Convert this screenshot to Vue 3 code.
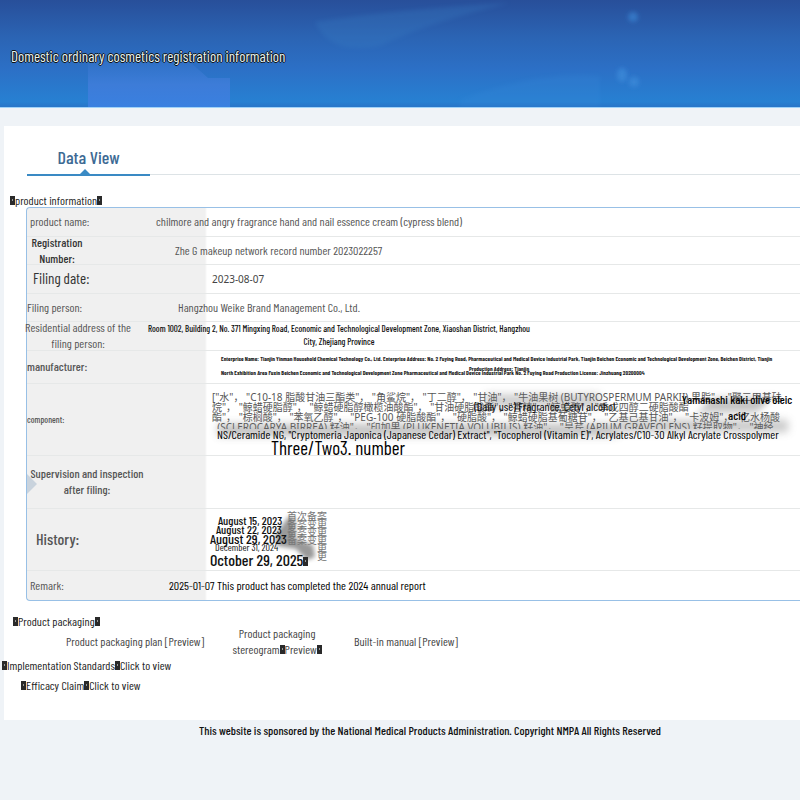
<script setup>
const ingredients = [
  '["水"， "C10-18 脂酸甘油三酯类"， "角鲨烷"， "丁二醇"， "甘油"， "牛油果树 (BUTYROSPERMUM PARKII) 果脂"， "聚二甲基硅',
  '烷"， "鲸蜡硬脂醇"， "鲸蜡硬脂醇橄榄油酸酯"， "甘油硬脂酸酯"，"香精"，"鲸蜡醇"，"季戊四醇二硬脂酸酯',
  '酯"， "棕榈酸"， "苯氧乙醇"， "PEG-100 硬脂酸酯"， "硬脂酸"， "鲸蜡硬脂基葡糖苷"， "乙基己基甘油"， "卡波姆"， "亿水杨酸',
  '  (SCLEROCARYA BIRREA) 籽油"， "印加果 (PLUKENETIA VOLUBILIS) 籽油"， "旱芹 (APIUM GRAVEOLENS) 籽提取物"， "神经'
]
</script>

<template>
  <div class="page">
    <header class="banner">
      <svg class="banner-art" viewBox="0 0 800 107" preserveAspectRatio="none" aria-hidden="true">
        <defs>
          <linearGradient id="patch" x1="0" y1="0" x2="0" y2="1">
            <stop offset="0" stop-color="#3b78d0" stop-opacity="0.3" />
            <stop offset="0.5" stop-color="#3d7cd8" />
            <stop offset="1" stop-color="#3a80e0" />
          </linearGradient>
          <filter id="soft"><feGaussianBlur stdDeviation="2" /></filter>
        </defs>
        <path d="M88 62H190L208 78H230V107H88Z" fill="url(#patch)" />
        <path d="M315 22Q390 10 510 3Q430 22 380 46Q330 56 315 22Z" fill="#3b80c4" opacity="0.25" filter="url(#soft)" />
        <path d="M460 100Q540 70 600 76V107H460Z" fill="#3b8ada" opacity="0.2" filter="url(#soft)" />
        <g fill="#3c8ad8" filter="url(#soft)">
          <circle cx="633" cy="17" r="5" opacity="0.6" />
          <ellipse cx="622" cy="75" rx="5" ry="7" opacity="0.8" />
          <circle cx="634" cy="82" r="5" opacity="0.8" />
        </g>
      </svg>
      <h1>Domestic ordinary cosmetics registration information</h1>
    </header>

    <main class="panel">
      <nav class="tabs"><a class="tab" href="#data">Data View</a></nav>

      <h2 class="product-heading"><i class="box"></i>product information<i class="box"></i></h2>

      <table id="data">
        <tbody>
          <tr class="h29">
            <th scope="row" class="s12 in3">product name:</th>
            <td class="s12 grey in16">chilmore and angry fragrance hand and nail essence cream (cypress blend)</td>
          </tr>
          <tr class="h28">
            <th scope="row" class="s12 medium dark in3"><span class="duo w52">Registration Number:</span></th>
            <td class="s12 grey in35">Zhe G makeup network record number 2023022257</td>
          </tr>
          <tr class="h29">
            <th scope="row" class="s15 dark in6">Filing date:</th>
            <td class="date">2023-08-07</td>
          </tr>
          <tr class="h28">
            <th scope="row" class="s12">Filing person:</th>
            <td class="s12 grey in38">Hangzhou Weike Brand Management Co., Ltd.</td>
          </tr>
          <tr class="h29">
            <th scope="row" class="s12"><span class="duo address-label">Residential address of the filing person:</span></th>
            <td class="s9 medium"><span class="address">Room 1002, Building 2, No. 371 Mingxing Road, Economic and Technological Development Zone, Xiaoshan District, Hangzhou City, Zhejiang Province</span></td>
          </tr>
          <tr class="h33">
            <th scope="row" class="s12 medium">manufacturer:</th>
            <td>
              <div class="maker">
                <p>Enterprise Name: Tianjin Yinman Household Chemical Technology Co., Ltd. Enterprise Address: No. 2 Fuying Road, Pharmaceutical and Medical Device Industrial Park, Tianjin Beichen Economic and Technological Development Zone, Beichen District, Tianjin</p>
                <p>North Exhibition Area Fuxin Beichen Economic and Technological Development Zone Pharmaceutical and Medical Device Industrial Park No. 2 Fuying Road Production License: Jinzhuang 20200004</p>
                <p class="maker-over">Production Address: Tianjin</p>
              </div>
            </td>
          </tr>
          <tr class="h72">
            <th scope="row" class="s9 medium">component:</th>
            <td>
              <div class="component">
                <div class="cn" lang="zh"><p v-for="line in ingredients" :key="line">{{ line }}</p></div>
                <i class="smudge sm-a"></i><i class="smudge sm-b"></i><i class="smudge sm-c"></i><i class="smudge sm-d"></i>
                <p class="over fragrance">(Daily use) Fragrance, Cetyl alcohol</p>
                <p class="over oleic">Yamanashi kaki olive oleic acid</p>
                <p class="over ceramide">NS/Ceramide NG, "Cryptomeria Japonica (Japanese Cedar) Extract", "Tocopherol (Vitamin E)", Acrylates/C10-30 Alkyl Acrylate Crosspolymer</p>
                <p class="over number">Three/Two3. number</p>
              </div>
            </td>
          </tr>
          <tr class="h53">
            <th scope="row" class="s12 medium in3"><i class="notch"></i><span class="duo w113">Supervision and inspection after filing:</span></th>
            <td></td>
          </tr>
          <tr class="h62">
            <th scope="row" class="s16 medium in9">History:</th>
            <td>
              <div class="history">
                <svg class="blot" viewBox="0 0 60 52" aria-hidden="true">
                  <defs><filter id="blur2"><feGaussianBlur stdDeviation="2" /></filter></defs>
                  <path d="M4 24L18 5L24 7L25 28L42 34L44 46L36 49L25 38L6 35Z" fill="#9a9a9a" filter="url(#blur2)" />
                </svg>
                <div class="stamps" lang="zh"><p>首次备案</p><p>备案变更</p><p>备案变更</p><p>备案变更</p><p>更</p><p>更</p></div>
                <ol>
                  <li class="s12 in8">August 15, 2023</li>
                  <li class="s12 in6">August 22, 2023</li>
                  <li class="s14">August 29, 2023</li>
                  <li class="s10 in5 regular">December 31, 2024</li>
                  <li class="s16 last">October 29, 2025<i class="box"></i></li>
                </ol>
              </div>
            </td>
          </tr>
          <tr class="h30">
            <th scope="row" class="s12 in3">Remark:</th>
            <td class="s12 black in29">2025-01-07 This product has completed the 2024 annual report</td>
          </tr>
        </tbody>
      </table>

      <section class="packaging">
        <h2><i class="box"></i>Product packaging<i class="box"></i></h2>
        <div class="links">
          <a href="#plan">Product packaging plan [Preview]</a>
          <a href="#stereogram" class="stereo">Product packaging<br />stereogram<i class="box"></i>Preview<i class="box"></i></a>
          <a href="#manual">Built-in manual [Preview]</a>
        </div>
        <p class="standards"><i class="box"></i>Implementation Standards<i class="box"></i><a href="#standards">Click to view</a></p>
        <p class="claim"><i class="box"></i>Efficacy Claim<i class="box"></i><a href="#claim">Click to view</a></p>
      </section>
    </main>

    <footer>This website is sponsored by the National Medical Products Administration. Copyright NMPA All Rights Reserved</footer>
  </div>
</template>

<style>
body { margin: 0; background: #eff3f7; }
</style>

<style scoped>
.page {
  min-height: 100vh;
  overflow: hidden;
  background: #eff3f7;
  color: #444;
  font-family: "Barlow Condensed", "Liberation Sans Narrow", "Roboto Condensed", Roboto, sans-serif;
}
h1, h2, p, ol { margin: 0; padding: 0; font-weight: 400; }
ol { list-style: none; font-weight: 500; }
a { color: inherit; text-decoration: none; }

.banner {
  position: relative;
  display: flex;
  align-items: center;
  height: 107px;
  padding: 0 11px;
  background: linear-gradient(180deg, #284f9a 0, #2b64b4 35%, #2c70c6 65%, #2780d2 95%, #2875c8 100%);
  border-bottom: 1px solid #9fd2f8;
}
.banner-art { position: absolute; inset: 0; width: 100%; height: 100%; }
h1 {
  position: relative;
  padding-top: 5px;
  font-size: 15px;
  color: #e6f4f4;
  text-shadow: 1px 0 #111, -1px 0 #111, 0 1px #111, 0 -1px #111;
}

.panel { margin: 18px 0 0 4px; padding: 20px 0 27px; background: #fff; }
.tabs { display: flex; margin-left: 23px; height: 28px; border-bottom: 1px solid #dde3e6; }
.tab {
  position: relative;
  box-sizing: border-box;
  width: 123px;
  height: 30px;
  font-size: 18px;
  font-weight: 500;
  line-height: 22px;
  text-align: center;
  color: #3d6a94;
  border-bottom: 2px solid #3a8ac4;
}
.tab::after {
  content: "";
  position: absolute;
  left: 53px;
  bottom: 0;
  border: 5px solid transparent;
  border-top: 0;
  border-bottom-color: #3a8ac4;
}
h2 { font-size: 12px; line-height: 16px; color: #222; white-space: nowrap; }
.product-heading { padding: 17px 0 0 6px; height: 15px; }

.box {
  display: inline-block;
  width: 5px;
  height: 9px;
  background: radial-gradient(circle at 50% 40%, #999 1px, transparent 1px), #2a2a2a;
}

table {
  width: calc(100% - 22px);
  margin-left: 22px;
  table-layout: fixed;
  border-collapse: separate;
  border-spacing: 0;
  border: 1px solid #98c0e6;
  border-right: 0;
  border-radius: 4px 0 0 4px;
  background: linear-gradient(90deg, #f0f0f0 178px, #fff 180px);
}
th, td { box-sizing: border-box; padding: 0 0 2px; border-bottom: 1px solid #e6e8e8; text-align: left; font-weight: 400; white-space: nowrap; vertical-align: middle; }
tr:last-child > * { border-bottom: 0; }
th { position: relative; width: 113px; color: #555; }
td { color: #111; }
.h28 > * { height: 28px; }
.h29 > * { height: 29px; }
.h30 > * { height: 29px; }
.h33 > * { height: 33px; }
.h53 > * { height: 53px; }
.h62 > * { height: 62px; }
.h72 > * { height: 72px; padding-bottom: 0; }
.s9 { font-size: 9px; }
.s10 { font-size: 10px; }
.s12 { font-size: 12px; }
.s14 { font-size: 14px; }
.s15 { font-size: 15px; }
.s16 { font-size: 16px; }
.medium { font-weight: 500; }
.regular { font-weight: 400; }
.grey { color: #555; }
.dark { color: #333; }
.black { color: #000; }
.in3 { padding-left: 3px; }
.in5 { padding-left: 5px; }
.in6 { padding-left: 6px; }
.in8 { padding-left: 8px; }
.in9 { padding-left: 9px; }
.in16 { padding-left: 16px; }
.in29 { padding-left: 29px; }
.in35 { padding-left: 35px; }
.in38 { padding-left: 38px; }
.duo { display: block; margin: -4px 0; line-height: 16px; text-align: center; white-space: normal; }
.w52 { width: 54px; }
.w113 { width: 114px; margin-right: -8px; }
.address-label { width: 106px; margin-left: -2px; }
.date { padding: 0 0 0 72px; font-family: "Noto Sans", sans-serif; font-size: 10px; color: #444; }
.address { display: block; width: 390px; margin: -2px 4px; line-height: 13px; text-align: center; white-space: normal; }

.maker { position: relative; margin: -2px 0; padding-left: 81px; font-size: 6px; line-height: 14px; color: #222; }
.maker p { font-weight: 700; }
.maker-over { position: absolute; left: 329px; top: 10px; }

.component { position: relative; height: 71px; }
.cn { position: absolute; left: 72px; top: 7px; width: 578px; height: 38px; overflow: hidden; font: 10px "Noto Sans", "Noto Sans CJK SC", sans-serif; color: #555; }
.cn p { height: 10px; line-height: 12px; white-space: pre; }
.smudge { position: absolute; background: #777; filter: blur(4px); opacity: 0.45; }
.sm-a { left: 345px; top: 10px; width: 115px; height: 14px; opacity: 0.35; }
.sm-b { left: 565px; top: 14px; width: 60px; height: 14px; transform: skewX(-40deg); }
.sm-c { left: 78px; top: 40px; width: 400px; height: 12px; }
.sm-d { left: 478px; top: 36px; width: 170px; height: 12px; opacity: 0.4; }
.over { position: absolute; color: #000; }
.fragrance { left: 334px; top: 14px; font-size: 12px; line-height: 16px; }
.oleic { left: 539px; top: 7px; width: 116px; font-size: 12px; font-weight: 500; line-height: 16px; text-align: center; white-space: normal; }
.ceramide { left: 77px; top: 42px; font-size: 12px; line-height: 16px; }
.number { left: 131px; top: 54px; font-size: 19px; line-height: 20px; }

.notch { position: absolute; left: 0; top: 18px; border: 10px solid transparent; border-left-color: #c9d3dd; border-right: 0; }

.history { position: relative; padding: 6px 0 0 70px; }
.history li { height: 9px; line-height: 9px; position: relative; }
.history li.last { height: 16px; line-height: 16px; }
.blot { position: absolute; left: 131px; top: 1px; width: 60px; height: 52px; }
.stamps { position: absolute; left: 147px; top: 1px; font: 10px "Noto Sans CJK SC", sans-serif; color: #777; text-align: right; }
.stamps p { height: 8px; line-height: 10px; }

.packaging { padding-top: 12px; font-size: 12px; color: #444; white-space: nowrap; }
.packaging h2 { padding-left: 9px; }
.links { display: flex; align-items: center; gap: 26px; height: 32px; margin-top: -4px; padding-left: 62px; line-height: 16px; }
.stereo { width: 94px; text-align: center; margin-right: 4px; }
.standards { margin-left: -2px; line-height: 16px; color: #222; }
.claim { padding: 4px 0 0 17px; line-height: 16px; color: #222; }

footer { padding: 2px 0 0 60px; font-size: 12px; font-weight: 500; line-height: 16px; text-align: center; color: #111; }
</style>
